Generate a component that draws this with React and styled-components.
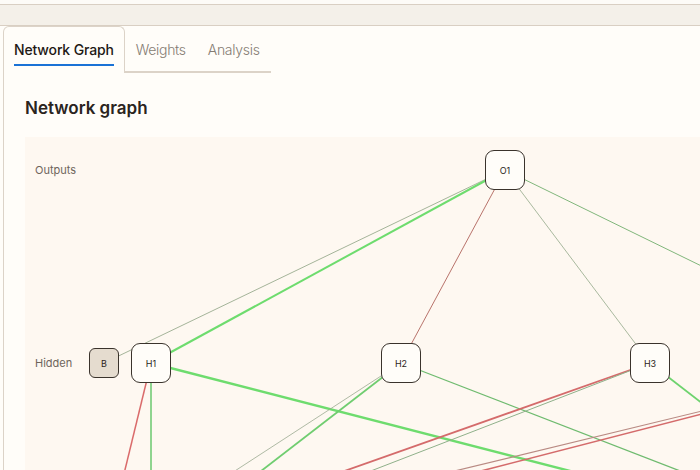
import React from "react";
import styled, { createGlobalStyle } from "styled-components";

const Global = createGlobalStyle`
  html, body { margin: 0; padding: 0; }
  body {
    background: #fffdf9;
    font-family: Inter, "Noto Sans", "Liberation Sans", sans-serif;
    overflow: hidden;
    width: 700px;
    height: 470px;
  }
`;

const Page = styled.div`
  display: flex;
  flex-direction: column;
  width: 700px;
  height: 470px;
  overflow: hidden;
`;

const TopStrip = styled.div`
  height: 4px;
  background: #fdfbf7;
  border-bottom: 1px solid #d9cfc3;
  flex: none;
`;

const Band = styled.div`
  height: 20px;
  background: #f4f0e9;
  border-bottom: 1px solid #d9cfc3;
  flex: none;
`;

const Main = styled.div`
  flex: 1;
  display: flex;
  flex-direction: column;
  padding-left: 3px;
  background: #fffdf9;
  min-height: 0;
`;

const TabList = styled.div`
  display: flex;
  align-self: flex-start;
  height: 45px;
  border-bottom: 2px solid #dcd3c8;
`;

const Tab = styled.div`
  box-sizing: border-box;
  height: 47px;
  margin-bottom: -2px;
  padding: 0 10px 7px;
  display: flex;
  flex-direction: column;
  justify-content: flex-end;
  align-items: center;
  border: 1px solid ${(p) => (p.$active ? "#dcd3c8" : "transparent")};
  border-bottom: none;
  border-radius: 6px 6px 0 0;
  background: ${(p) => (p.$active ? "#fffdf9" : "transparent")};
  font-size: 14px;
  letter-spacing: ${(p) => (p.$active ? "-0.15px" : "-0.3px")};
  font-weight: ${(p) => (p.$active ? 500 : 300)};
  color: ${(p) => (p.$active ? "#1e1915" : "#857c73")};
`;

const TabLabel = styled.span`
  line-height: 17px;
  padding-bottom: 6px;
  border-bottom: 2px solid ${(p) => (p.$active ? "#1a72d6" : "transparent")};
  white-space: nowrap;
`;

const Panel = styled.div`
  flex: 1;
  border-left: 1px solid #dcd3c8;
  padding: 24px 0 0 21px;
  display: flex;
  flex-direction: column;
  min-height: 0;
`;

const Heading = styled.h2`
  margin: 0 0 18px;
  font-size: 17px;
  line-height: 22px;
  font-weight: 600;
  color: #2a2420;
`;

const Canvas = styled.div`
  position: relative;
  width: 1000px;
  height: 600px;
  background: #fef8f1;
  flex: none;
`;

const Lines = styled.svg`
  position: absolute;
  left: 0;
  top: 0;
`;

const LayerLabel = styled.div`
  position: absolute;
  left: 10px;
  transform: translateY(-50%);
  font-size: 11px;
  color: #6e655c;
`;

const Node = styled.div`
  position: absolute;
  box-sizing: border-box;
  width: ${(p) => (p.$bias ? 30 : 40)}px;
  height: ${(p) => (p.$bias ? 30 : 40)}px;
  transform: translate(-50%, -50%);
  border: 1.4px solid #3a332c;
  border-radius: ${(p) => (p.$bias ? 6 : 9)}px;
  background: ${(p) => (p.$bias ? "#e5dccf" : "#fffdf9")};
  display: flex;
  align-items: center;
  justify-content: center;
  font-size: 9px;
  font-weight: 400;
  color: #2a2420;
`;

const OUT_Y = 33;
const HID_Y = 226;
const IN_Y = 419;

const pos = {
  O1: [480, OUT_Y],
  HB: [79, HID_Y],
  H1: [126, HID_Y],
  H2: [376, HID_Y],
  H3: [625, HID_Y],
  H4: [875, HID_Y],
  IB: [79, IN_Y],
  I1: [126, IN_Y],
  I4: [875, IN_Y],
};

const edges = [
  ["O1", "HB", "#9aab8e", 0.9],
  ["O1", "H1", "#6edc6e", 2],
  ["O1", "H2", "#b8736b", 1],
  ["O1", "H3", "#93a889", 0.8],
  ["O1", "H4", "#80b67b", 1],
  ["H1", "IB", "#da6b6b", 1.5],
  ["H1", "I1", "#8fd48f", 2],
  ["H1", "I4", "#6edc6e", 2.4],
  ["H2", "IB", "#9aa991", 0.8],
  ["H2", "I1", "#70cd70", 1.8],
  ["H2", "I4", "#6fbb6f", 1.3],
  ["H3", "IB", "#d46b6b", 1.8],
  ["H3", "I1", "#8fb08a", 1],
  ["H3", "I4", "#6ed36e", 1.8],
  ["H4", "IB", "#b98a83", 1.2],
  ["H4", "I1", "#d46b6b", 1.6],
];

const nodes = [
  { id: "O1", label: "O1" },
  { id: "HB", label: "B", bias: true },
  { id: "H1", label: "H1" },
  { id: "H2", label: "H2" },
  { id: "H3", label: "H3" },
];

function Graph() {
  return (
    <Canvas>
      <Lines width="1000" height="600" viewBox="0 0 1000 600">
        {edges.map(([a, b, c, w]) => (
          <line
            key={a + b}
            x1={pos[a][0]}
            y1={pos[a][1]}
            x2={pos[b][0]}
            y2={pos[b][1]}
            stroke={c}
            strokeWidth={w}
          />
        ))}
      </Lines>
      <LayerLabel style={{ top: OUT_Y }}>Outputs</LayerLabel>
      <LayerLabel style={{ top: HID_Y }}>Hidden</LayerLabel>
      {nodes.map((n) => (
        <Node key={n.id} $bias={n.bias} style={{ left: pos[n.id][0], top: pos[n.id][1] }}>
          {n.label}
        </Node>
      ))}
    </Canvas>
  );
}

export default function App() {
  const tabs = ["Network Graph", "Weights", "Analysis"];
  return (
    <Page>
      <Global />
      <TopStrip />
      <Band />
      <Main>
        <TabList>
          {tabs.map((t, i) => (
            <Tab key={t} $active={i === 0}>
              <TabLabel $active={i === 0}>{t}</TabLabel>
            </Tab>
          ))}
        </TabList>
        <Panel>
          <Heading>Network graph</Heading>
          <Graph />
        </Panel>
      </Main>
    </Page>
  );
}
